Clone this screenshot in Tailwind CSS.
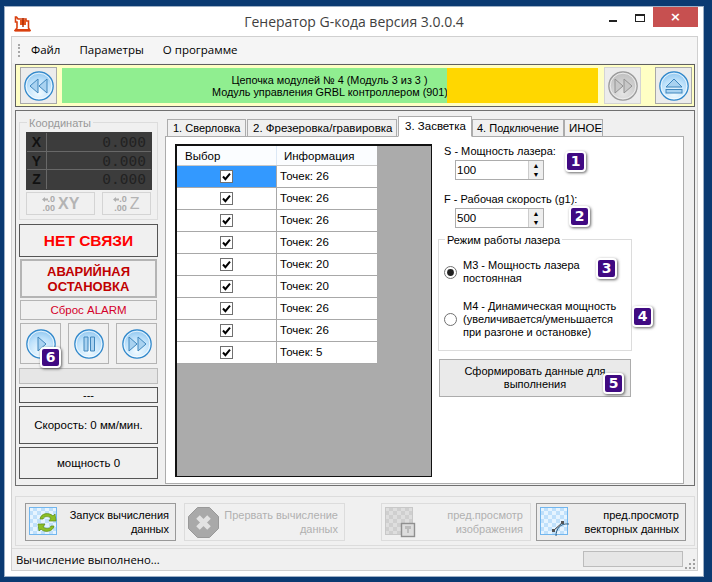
<!DOCTYPE html>
<html lang="ru">
<head>
<meta charset="UTF-8">
<title>Генератор G-кода</title>
<script src="https://cdn.jsdelivr.net/npm/@tailwindcss/browser@4"></script>
</head>
<body class="bg-[#0a3a72]">
<svg width="0" height="0" class="absolute">
  <defs>
    <radialGradient id="ball" cx="50%" cy="75%" r="75%">
      <stop offset="0%" stop-color="#f2fbff"/>
      <stop offset="60%" stop-color="#bfe2fb"/>
      <stop offset="100%" stop-color="#8cc4ee"/>
    </radialGradient>
    <radialGradient id="ballgrey" cx="50%" cy="75%" r="75%">
      <stop offset="0%" stop-color="#e6e6e6"/>
      <stop offset="100%" stop-color="#bdbdbd"/>
    </radialGradient>
    <pattern id="checkblue" width="8" height="8" patternUnits="userSpaceOnUse">
      <rect width="8" height="8" fill="#bfe0fb"/>
      <rect width="4" height="4" fill="#e6f4ff"/>
      <rect x="4" y="4" width="4" height="4" fill="#e6f4ff"/>
    </pattern>
    <pattern id="checkgrey" width="8" height="8" patternUnits="userSpaceOnUse">
      <rect width="8" height="8" fill="#cfcfcf"/>
      <rect width="4" height="4" fill="#dedede"/>
      <rect x="4" y="4" width="4" height="4" fill="#dedede"/>
    </pattern>
    <symbol id="round" viewBox="0 0 30 30">
      <circle cx="15" cy="15" r="14.2" fill="url(#ball)" stroke="#2f86c9" stroke-width="1.2"/>
      <circle cx="15" cy="15" r="12.8" fill="none" stroke="#fff" stroke-width="0.9" opacity=".8"/>
    </symbol>
    <symbol id="roundgrey" viewBox="0 0 30 30">
      <circle cx="15" cy="15" r="14.2" fill="url(#ballgrey)" stroke="#9a9a9a" stroke-width="1.2"/>
      <circle cx="15" cy="15" r="12.8" fill="none" stroke="#eee" stroke-width="0.9"/>
    </symbol>
    <symbol id="check" viewBox="0 0 13 13">
      <rect x=".5" y=".5" width="12" height="12" fill="#fff" stroke="#707070"/>
      <path d="M3 6.5 L5.4 9.2 L10 3.6" fill="none" stroke="#000" stroke-width="2"/>
    </symbol>
    <symbol id="decimals" viewBox="0 0 6 5">
      <path d="M0 2.5 L3 0 V1.5 H6 V3.5 H3 V5 Z" fill="#b0b0b0"/>
    </symbol>
  </defs>
</svg>

<div class="relative w-[712px] h-[582px] overflow-hidden bg-[#0a3a72] font-['Liberation_Sans',sans-serif] text-[11px] leading-[14px] text-black">
  <div class="ml-[4px] mt-[6px] w-[700px] h-[571px] bg-white border border-[#9db0c6]">

    <!-- title bar -->
    <div class="relative flex h-[29px] items-center">
      <svg class="ml-[9px] mt-[5px] w-[17px] h-[16px]" viewBox="0 0 17 16">
        <path d="M1 14.5 H16 L14.5 12 V5 H12 V3 H4 L2.5 1 H1.5 V6 H3 V12 Z" fill="none" stroke="#d9400f" stroke-width="1.6"/>
        <rect x="6" y="4" width="6" height="5" fill="#e8561c"/>
        <path d="M9 2 V11" stroke="#a82a00" stroke-width="1.4"/>
        <rect x="1" y="13" width="15" height="2.5" fill="#d9400f"/>
      </svg>
      <div class="flex-1 text-center font-['Open_Sans',sans-serif] text-[14px] leading-[20px] text-[#3f3f3f] pl-[68px] whitespace-nowrap">Генератор G-кода версия 3.0.0.4</div>
      <div class="flex items-start h-[29px] mr-[5px]">
        <div class="w-[8px] h-[2px] bg-[#222] mt-[13px] mr-[18px]"></div>
        <div class="w-[10px] h-[8px] border border-[#222] border-t-2 mt-[7px] mr-[8px]"></div>
        <div class="w-[45px] h-[20px] bg-[#c75050] text-white text-center font-['DejaVu_Sans',sans-serif] text-[13px] leading-[19px] font-bold">×</div>
      </div>
    </div>

    <!-- client area -->
    <div class="ml-[6px] w-[687px] h-[535px] bg-[#f0f0f0] border border-[#d0d0d0]">

      <!-- menu -->
      <div class="relative flex h-[26px] items-center bg-[#f5f5f5] font-['Open_Sans',sans-serif] text-[11.5px]">
        <div class="ml-[6px] w-[3px] h-[13px] border-l-2 border-dotted border-[#a8a8a8]"></div>
        <span class="ml-[10px]">Файл</span>
        <span class="ml-[19px]">Параметры</span>
        <span class="ml-[19px]">О программе</span>
      </div>

      <!-- module bar -->
      <div class="ml-[3px] mt-px flex items-center w-[680px] h-[43px] bg-[#ffffc4] border border-[#606060] pl-[4px]">
        <div class="flex items-center justify-center w-[37px] h-[37px] bg-[#ececec] border border-[#a8a8a8]">
          <svg class="w-[30px] h-[30px]" viewBox="0 0 30 30"><use href="#round"/>
            <path d="M14 8 V22 L6 15 Z M23 8 V22 L15 15 Z" fill="#a9d2f0" stroke="#3f86bd" stroke-width="1"/></svg>
        </div>
        <div class="ml-[5px] flex w-[536px] h-[35px]">
          <div class="w-[385px] bg-[#90ee90] pl-[150px] text-center text-[10.85px] leading-[12px] pt-[6px] whitespace-nowrap">Цепочка модулей № 4 (Модуль 3 из 3 )<br>Модуль управления GRBL контроллером (901)</div>
          <div class="w-[151px] bg-[#ffd700]"></div>
        </div>
        <div class="ml-[6px] flex items-center justify-center w-[37px] h-[37px] bg-[#ececec] border border-[#d4d4d4]">
          <svg class="w-[30px] h-[30px]" viewBox="0 0 30 30"><use href="#roundgrey"/>
            <path d="M7 8 V22 L15 15 Z M16 8 V22 L24 15 Z" fill="#c8c8c8" stroke="#929292" stroke-width="1"/></svg>
        </div>
        <div class="ml-[14px] flex items-center justify-center w-[37px] h-[37px] bg-[#ececec] border border-[#a8a8a8]">
          <svg class="w-[30px] h-[30px]" viewBox="0 0 30 30"><use href="#round"/>
            <path d="M15 8 L23 16 H7 Z" fill="#a9d2f0" stroke="#3f86bd" stroke-width="1"/>
            <rect x="7" y="18.5" width="16" height="3.5" fill="#a9d2f0" stroke="#3f86bd" stroke-width="1"/></svg>
        </div>
      </div>

      <!-- main panel -->
      <div class="ml-[3px] mt-[3px] flex w-[680px] h-[376px] border border-[#707070]">

        <!-- left column -->
        <div class="ml-[3px] mt-[11px] w-[139px] flex flex-col">
          <div class="relative h-[98px] border border-[#dcdcdc]">
            <span class="absolute left-[7px] -top-[7px] bg-[#f0f0f0] px-[2px] text-[#999]">Координаты</span>
            <div class="ml-[6px] mt-[9px] w-[126px] h-[58px] bg-[#3c3c3c] border border-[#3c3c3c] grid grid-cols-[20px_1fr] grid-rows-3 font-['DejaVu_Sans_Mono',monospace] text-[14.5px] leading-[18px] text-[#222]">
              <div class="border-r border-b border-[#686868] text-center font-['Liberation_Sans'] font-bold text-[14px] text-[#111]">X</div>
              <div class="border-b border-[#686868] text-right pr-[5px]">0.000</div>
              <div class="border-r border-b border-[#686868] text-center font-['Liberation_Sans'] font-bold text-[14px] text-[#111]">Y</div>
              <div class="border-b border-[#686868] text-right pr-[5px]">0.000</div>
              <div class="border-r border-[#686868] text-center font-['Liberation_Sans'] font-bold text-[14px] text-[#111]">Z</div>
              <div class="text-right pr-[5px]">0.000</div>
            </div>
            <div class="ml-[6px] mt-[2px] flex">
              <div class="flex items-center justify-center gap-[3px] w-[69px] h-[23px] border border-[#d4d4d4] text-[#b4b4b4]">
                <span class="flex flex-col items-end font-bold text-[9px] leading-[9px] text-[#aaa]"><span class="flex items-center"><svg class="w-[6px] h-[5px]"><use href="#decimals"/></svg>.0</span><span>.00</span></span>
                <span class="font-bold text-[16px]">XY</span>
              </div>
              <div class="ml-[7px] flex items-center justify-center gap-[3px] w-[49px] h-[23px] border border-[#d4d4d4] text-[#b4b4b4]">
                <span class="flex flex-col items-end font-bold text-[9px] leading-[9px] text-[#aaa]"><span class="flex items-center"><svg class="w-[6px] h-[5px]"><use href="#decimals"/></svg>.0</span><span>.00</span></span>
                <span class="text-[16px]">Z</span>
              </div>
            </div>
          </div>
          <div class="mt-[4px] h-[33px] flex items-center justify-center border border-[#555] text-[15.5px] text-[#ff0000] font-bold">НЕТ СВЯЗИ</div>
          <div class="mt-[2px] ml-px w-[137px] h-[39px] flex items-center justify-center text-center border-2 border-[#b4b4b4] text-[13px] leading-[15px] font-bold text-[#c00000]">АВАРИЙНАЯ<br>ОСТАНОВКА</div>
          <div class="mt-[2px] ml-px w-[137px] h-[20px] flex items-center justify-center border border-[#b4b4b4] text-[11.5px] text-[#d4002a]">Сброс ALARM</div>
          <div class="mt-[3px] ml-px w-[137px] flex justify-between">
            <div class="flex items-center justify-center w-[41px] h-[41px] border border-[#b4b4b4]">
              <svg class="w-[30px] h-[30px]" viewBox="0 0 30 30"><use href="#round"/><path d="M12 8 V22 L20 15 Z" fill="#a9d2f0" stroke="#3f86bd"/></svg>
            </div>
            <div class="flex items-center justify-center w-[41px] h-[41px] border border-[#b4b4b4]">
              <svg class="w-[30px] h-[30px]" viewBox="0 0 30 30"><use href="#round"/><path d="M10 8 H14 V22 H10 Z M16.5 8 H20.5 V22 H16.5 Z" fill="#a9d2f0" stroke="#3f86bd"/></svg>
            </div>
            <div class="flex items-center justify-center w-[41px] h-[41px] border border-[#b4b4b4]">
              <svg class="w-[30px] h-[30px]" viewBox="0 0 30 30"><use href="#round"/><path d="M7 8 V22 L15 15 Z M16 8 V22 L24 15 Z" fill="#a9d2f0" stroke="#3f86bd"/></svg>
            </div>
          </div>
          <div class="mt-[4px] h-[16px] bg-[#e6e6e6] border border-[#bcbcbc]"></div>
          <div class="mt-[3px] h-[16px] flex items-center justify-center border border-[#555]">---</div>
          <div class="mt-[3px] h-[38px] flex items-center justify-center border border-[#555] text-[11.5px]">Скорость: 0 мм/мин.</div>
          <div class="mt-[3px] h-[32px] flex items-center justify-center border border-[#555] text-[11.5px]">мощность 0</div>
        </div>

        <!-- tabs -->
        <div class="ml-[7px] mt-[5px] w-[519px]">
          <div class="relative z-10 flex items-end h-[21px] -mb-px pl-[2px] whitespace-nowrap text-[11.5px]">
            <div class="w-[79px] h-[18px] bg-[#f0f0f0] border border-[#acacac] pl-[5px] text-[11px] leading-[17px]">1. Сверловка</div>
            <div class="ml-px w-[150px] h-[18px] bg-[#f0f0f0] border border-[#acacac] pl-[5px] leading-[17px]">2. Фрезеровка/гравировка</div>
            <div class="ml-px w-[74px] h-[21px] bg-white border border-[#acacac] border-b-white pl-[6px] leading-[18px]">3. Засветка</div>
            <div class="w-[92px] h-[18px] bg-[#f0f0f0] border border-[#acacac] pl-[4px] text-[11px] leading-[17px]">4. Подключение</div>
            <div class="w-[39px] h-[18px] bg-[#f0f0f0] border border-[#acacac] pl-[4px] leading-[17px]">ИНОЕ</div>
          </div>
          <div class="flex h-[348px] bg-white border border-[#acacac]">

            <!-- table -->
            <div class="ml-[9px] mt-[7px] w-[257px] h-[333px] bg-[#ababab] border-2 border-[#111] border-r border-b text-[11.5px]">
              <div class="flex w-[200px] h-[20px] bg-[#fbfdff] border-b border-[#c8c8c8]">
                <div class="w-[100px] pl-[8px] leading-[20px] border-r border-[#dce8f5]">Выбор</div>
                <div class="pl-[7px] leading-[20px]">Информация</div>
              </div>
              <div class="flex w-[200px] h-[22px] bg-white border-b border-[#a8a8a8]"><div class="flex w-[100px] items-center justify-center bg-[#3399ff] border-r border-[#a8a8a8]"><svg class="w-[13px] h-[13px]"><use href="#check"/></svg></div><div class="pl-[3px] leading-[21px]">Точек: 26</div></div>
              <div class="flex w-[200px] h-[22px] bg-white border-b border-[#a8a8a8]"><div class="flex w-[100px] items-center justify-center border-r border-[#a8a8a8]"><svg class="w-[13px] h-[13px]"><use href="#check"/></svg></div><div class="pl-[3px] leading-[21px]">Точек: 26</div></div>
              <div class="flex w-[200px] h-[22px] bg-white border-b border-[#a8a8a8]"><div class="flex w-[100px] items-center justify-center border-r border-[#a8a8a8]"><svg class="w-[13px] h-[13px]"><use href="#check"/></svg></div><div class="pl-[3px] leading-[21px]">Точек: 26</div></div>
              <div class="flex w-[200px] h-[22px] bg-white border-b border-[#a8a8a8]"><div class="flex w-[100px] items-center justify-center border-r border-[#a8a8a8]"><svg class="w-[13px] h-[13px]"><use href="#check"/></svg></div><div class="pl-[3px] leading-[21px]">Точек: 26</div></div>
              <div class="flex w-[200px] h-[22px] bg-white border-b border-[#a8a8a8]"><div class="flex w-[100px] items-center justify-center border-r border-[#a8a8a8]"><svg class="w-[13px] h-[13px]"><use href="#check"/></svg></div><div class="pl-[3px] leading-[21px]">Точек: 20</div></div>
              <div class="flex w-[200px] h-[22px] bg-white border-b border-[#a8a8a8]"><div class="flex w-[100px] items-center justify-center border-r border-[#a8a8a8]"><svg class="w-[13px] h-[13px]"><use href="#check"/></svg></div><div class="pl-[3px] leading-[21px]">Точек: 20</div></div>
              <div class="flex w-[200px] h-[22px] bg-white border-b border-[#a8a8a8]"><div class="flex w-[100px] items-center justify-center border-r border-[#a8a8a8]"><svg class="w-[13px] h-[13px]"><use href="#check"/></svg></div><div class="pl-[3px] leading-[21px]">Точек: 26</div></div>
              <div class="flex w-[200px] h-[22px] bg-white border-b border-[#a8a8a8]"><div class="flex w-[100px] items-center justify-center border-r border-[#a8a8a8]"><svg class="w-[13px] h-[13px]"><use href="#check"/></svg></div><div class="pl-[3px] leading-[21px]">Точек: 26</div></div>
              <div class="flex w-[200px] h-[22px] bg-white border-b border-[#a8a8a8]"><div class="flex w-[100px] items-center justify-center border-r border-[#a8a8a8]"><svg class="w-[13px] h-[13px]"><use href="#check"/></svg></div><div class="pl-[3px] leading-[21px]">Точек: 5</div></div>
            </div>

            <!-- laser settings -->
            <div class="ml-[6px] w-[194px]">
              <div class="ml-[6px] mt-[7px]">S - Мощность лазера:</div>
              <div class="ml-[17px] mt-[2px] flex w-[89px] h-[20px] border border-[#acacac] pl-[1px] leading-[19px] text-[11.5px]">
                <span class="flex-1">100</span>
                <div class="w-[15px] flex flex-col bg-[#eee] border-l border-[#ccc] text-[7px] leading-[9px] text-center"><span class="h-[9px]">▲</span><span class="h-[9px]">▼</span></div>
              </div>
              <div class="ml-[6px] mt-[12px]">F - Рабочая скорость (g1):</div>
              <div class="ml-[17px] mt-[2px] flex w-[89px] h-[20px] border border-[#acacac] pl-[1px] leading-[19px] text-[11.5px]">
                <span class="flex-1">500</span>
                <div class="w-[15px] flex flex-col bg-[#eee] border-l border-[#ccc] text-[7px] leading-[9px] text-center"><span class="h-[9px]">▲</span><span class="h-[9px]">▼</span></div>
              </div>
              <div class="relative mt-[11px] h-[112px] border border-[#dcdcdc]">
                <span class="absolute left-[6px] -top-[7px] bg-white px-[2px]">Режим работы лазера</span>
                <div class="flex items-start mt-[19px] ml-[5px]">
                  <svg class="w-[13px] h-[13px] mt-[7px] shrink-0" viewBox="0 0 13 13"><circle cx="6.5" cy="6.5" r="6" fill="#fff" stroke="#707070"/><circle cx="6.5" cy="6.5" r="3.4" fill="#222"/></svg>
                  <div class="ml-[6px] leading-[13px]">M3 - Мощность лазера<br>постоянная</div>
                </div>
                <div class="flex items-start mt-[15px] ml-[5px]">
                  <svg class="w-[13px] h-[13px] mt-[13px] shrink-0" viewBox="0 0 13 13"><circle cx="6.5" cy="6.5" r="6" fill="#fff" stroke="#707070"/></svg>
                  <div class="ml-[6px] leading-[13px] whitespace-nowrap">M4 - Динамическая мощность<br>(увеличивается/уменьшается<br>при разгоне и остановке)</div>
                </div>
              </div>
              <div class="mt-[8px] ml-px w-[192px] h-[38px] flex items-center justify-center text-center bg-[#eaeaea] border border-[#acacac] leading-[13px]">Сформировать данные для<br>выполнения</div>
            </div>
          </div>
        </div>
      </div>

      <!-- action buttons -->
      <div class="ml-[3px] mt-[10px] flex w-[680px] h-[50px] border border-[#dcdcdc] pt-[6px] pl-[9px] whitespace-nowrap">
        <div class="flex w-[151px] h-[38px] border border-[#999] bg-[#ededed]">
          <svg class="ml-[3px] mt-[3px] w-[30px] h-[30px] shrink-0" viewBox="0 0 30 30">
            <rect x=".5" y=".5" width="27" height="27" fill="url(#checkblue)" stroke="#72b6ee"/>
            <path d="M11 12 C12 6 20 5 24 9 L26 7 L27 14 L20 14 L22 11 C19 9 15 9 14 12 Z" fill="#8cbf26" stroke="#5c8a14" stroke-width=".7"/>
            <path d="M25 19 C24 25 15 26 12 22 L10 24 L9 17 L16 17 L14 20 C17 22 21 22 22 19 Z" fill="#8cbf26" stroke="#5c8a14" stroke-width=".7"/>
          </svg>
          <div class="flex-1 text-right pr-[6px] pt-[5px] leading-[13.5px]">Запуск вычисления<br>данных</div>
        </div>
        <div class="ml-[8px] flex w-[161px] h-[38px] border border-[#dcdcdc]">
          <svg class="ml-[3px] mt-[3px] w-[31px] h-[31px] shrink-0" viewBox="0 0 31 31">
            <path d="M9.5 .5 H21.5 L30.5 9.5 V21.5 L21.5 30.5 H9.5 L.5 21.5 V9.5 Z" fill="#a9a9a9" stroke="#999"/>
            <path d="M10 10 L21 21 M21 10 L10 21" stroke="#e2e2e2" stroke-width="5"/>
          </svg>
          <div class="flex-1 text-right pr-[6px] pt-[5px] leading-[13.5px] text-[#b0b0b0]">Прервать вычисление<br>данных</div>
        </div>
        <div class="ml-[36px] flex w-[150px] h-[38px] border border-[#dcdcdc]">
          <svg class="ml-[3px] mt-[3px] w-[31px] h-[31px] shrink-0" viewBox="0 0 31 31">
            <rect x=".5" y=".5" width="27" height="27" fill="url(#checkgrey)" stroke="#c8c8c8"/>
            <rect x="16.5" y="16.5" width="13" height="13" fill="#ddd" stroke="#8f8f8f" stroke-width="1.4"/>
            <path d="M20 19 H26 V22 H24 V26 H22 V22 H20 Z" fill="#bcbcbc"/>
          </svg>
          <div class="flex-1 text-right pr-[7px] pt-[5px] leading-[13.5px] text-[#b0b0b0]">пред.просмотр<br>изображения</div>
        </div>
        <div class="ml-[5px] flex w-[150px] h-[38px] border border-[#999] bg-[#ededed]">
          <svg class="ml-[3px] mt-[3px] w-[31px] h-[31px] shrink-0" viewBox="0 0 31 31">
            <rect x=".5" y=".5" width="27" height="27" fill="url(#checkblue)" stroke="#72b6ee"/>
            <path d="M16 29 C16 22 20 16 29 17" fill="none" stroke="#285a80" stroke-width="1"/>
            <path d="M13 24 L23 15" stroke="#333" stroke-width="1"/>
            <rect x="12" y="22" width="3" height="3" fill="#555"/>
            <rect x="21" y="14" width="3" height="3" fill="#555"/>
          </svg>
          <div class="flex-1 text-right pr-[6px] pt-[5px] leading-[13.5px]">пред.просмотр<br>векторных данных</div>
        </div>
      </div>

      <!-- status bar -->
      <div class="mt-[2px] flex items-center h-[23px] border-t border-[#dcdcdc] pl-[4px] font-['Open_Sans',sans-serif] text-[11.3px]">
        <span class="flex-1">Вычисление выполнено...</span>
        <div class="w-[100px] h-[16px] bg-[#e6e6e6] border border-[#bcbcbc] mb-[3px]"></div>
        <svg class="ml-[2px] mr-[1px] mt-[8px] w-[11px] h-[11px]" viewBox="0 0 11 11" fill="#a0a0a0">
          <rect x="8" y="0" width="2" height="2"/><rect x="4" y="4" width="2" height="2"/><rect x="8" y="4" width="2" height="2"/><rect x="0" y="8" width="2" height="2"/><rect x="4" y="8" width="2" height="2"/><rect x="8" y="8" width="2" height="2"/>
        </svg>
      </div>
    </div>
  </div>

  <!-- numbered callouts on top of the screenshot -->
  <div class="absolute left-[565px] top-[151px] w-[21px] h-[21px] rounded-[4px] border-2 border-white bg-[#400a82] shadow-[1px_1px_3px_rgba(0,0,0,.6)] text-center text-white font-['DejaVu_Sans',sans-serif] font-bold text-[14px] leading-[17px]">1</div>
  <div class="absolute left-[569px] top-[206px] w-[21px] h-[21px] rounded-[4px] border-2 border-white bg-[#400a82] shadow-[1px_1px_3px_rgba(0,0,0,.6)] text-center text-white font-['DejaVu_Sans',sans-serif] font-bold text-[14px] leading-[17px]">2</div>
  <div class="absolute left-[596px] top-[258px] w-[21px] h-[21px] rounded-[4px] border-2 border-white bg-[#400a82] shadow-[1px_1px_3px_rgba(0,0,0,.6)] text-center text-white font-['DejaVu_Sans',sans-serif] font-bold text-[14px] leading-[17px]">3</div>
  <div class="absolute left-[632px] top-[306px] w-[21px] h-[21px] rounded-[4px] border-2 border-white bg-[#400a82] shadow-[1px_1px_3px_rgba(0,0,0,.6)] text-center text-white font-['DejaVu_Sans',sans-serif] font-bold text-[14px] leading-[17px]">4</div>
  <div class="absolute left-[603px] top-[373px] w-[21px] h-[21px] rounded-[4px] border-2 border-white bg-[#400a82] shadow-[1px_1px_3px_rgba(0,0,0,.6)] text-center text-white font-['DejaVu_Sans',sans-serif] font-bold text-[14px] leading-[17px]">5</div>
  <div class="absolute left-[40px] top-[347px] w-[21px] h-[21px] rounded-[4px] border-2 border-white bg-[#400a82] shadow-[1px_1px_3px_rgba(0,0,0,.6)] text-center text-white font-['DejaVu_Sans',sans-serif] font-bold text-[14px] leading-[17px]">6</div>
</div>
</body>
</html>
